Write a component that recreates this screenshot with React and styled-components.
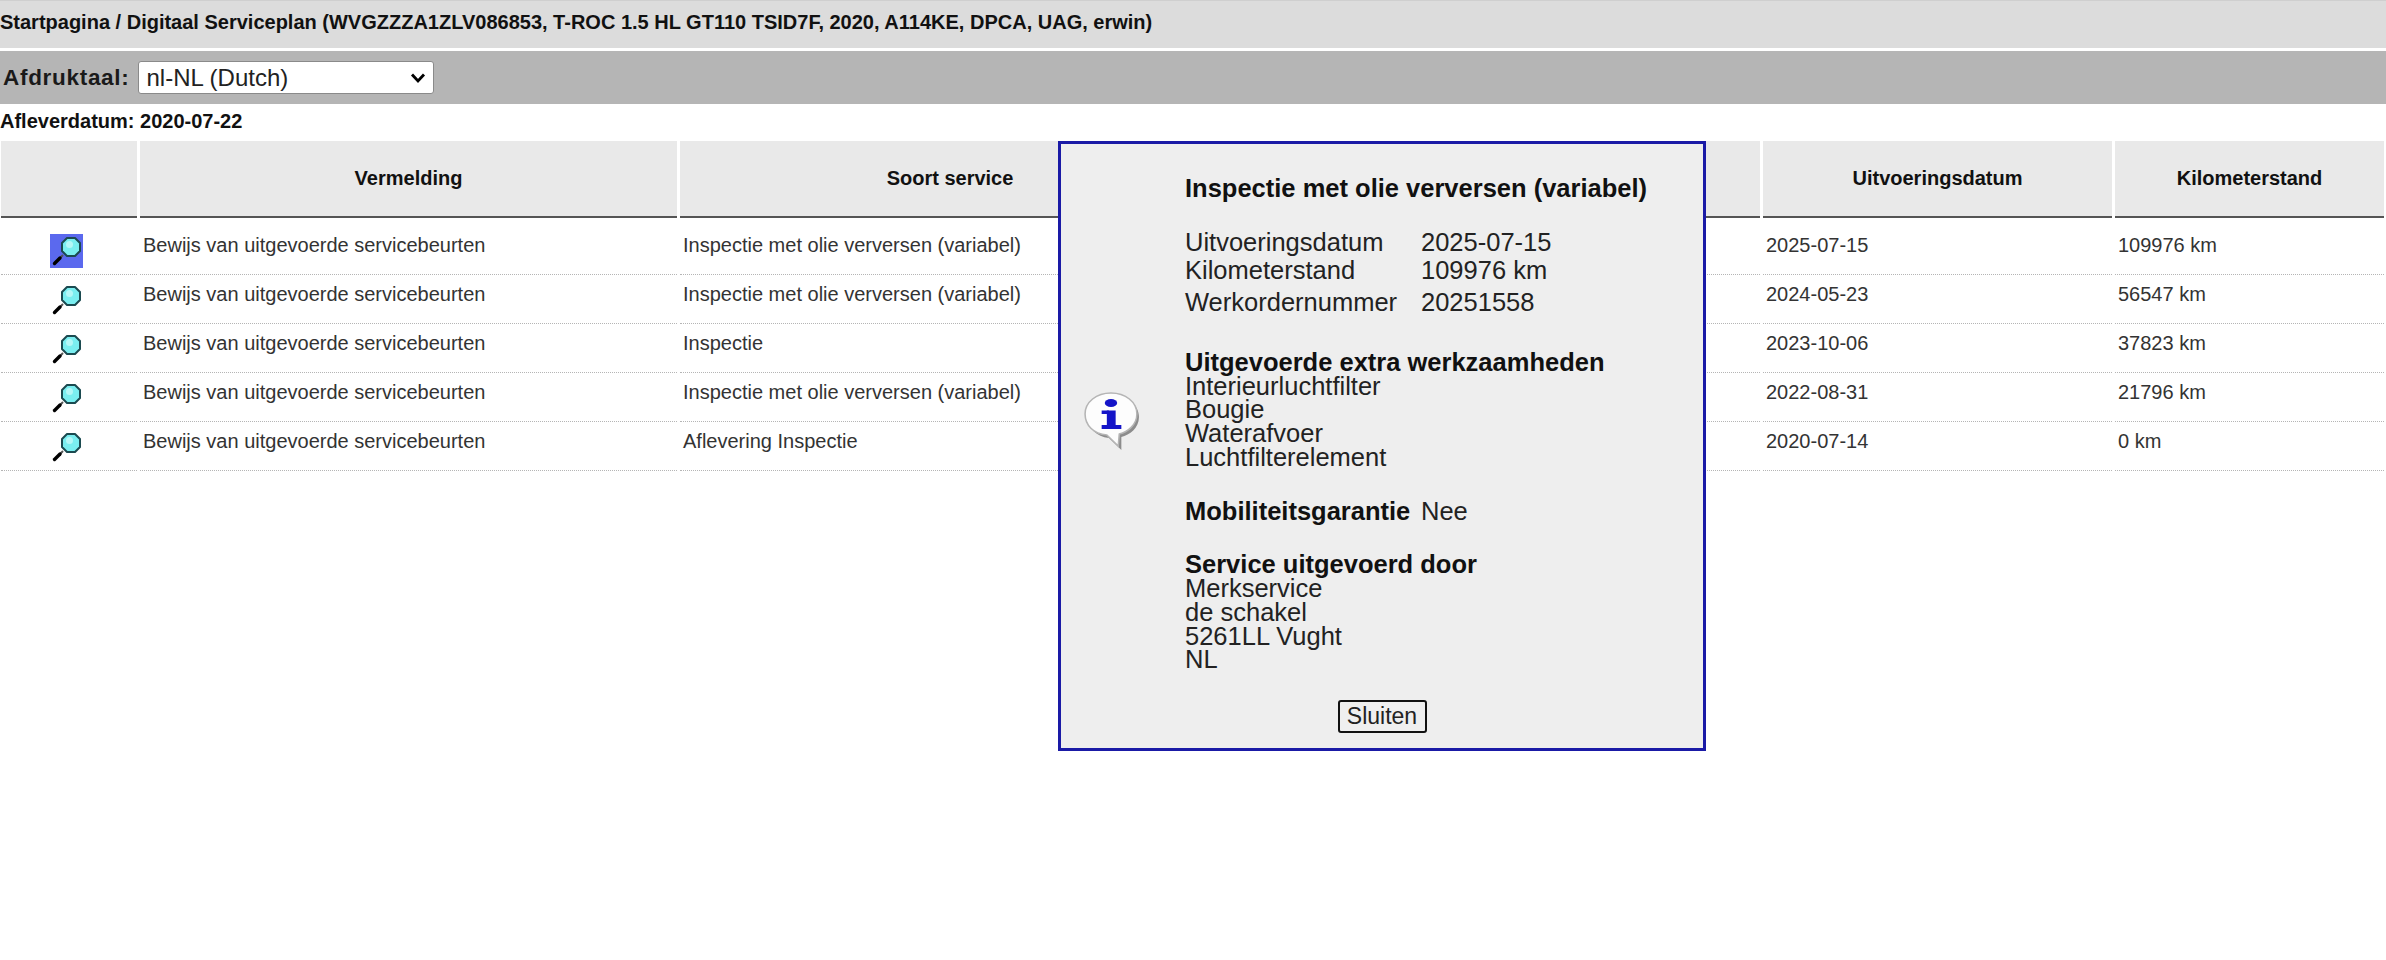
import React from "react";
import styled, { createGlobalStyle } from "styled-components";

const Global = createGlobalStyle`
  html, body { margin: 0; padding: 0; background: #fff; }
  body { font-family: "Liberation Sans", Arial, sans-serif; color: #111; }
`;

const Page = styled.div`
  position: relative;
  width: 2386px;
  height: 960px;
  overflow: hidden;
`;
const TopBar = styled.div`
  height: 48px;
  background: #dcdcdc;
  border-top: 1px solid #cfcfcf;
  box-sizing: border-box;
  padding-bottom: 5px;
  display: flex;
  align-items: center;
  font-size: 20px;
  font-weight: 700;
  color: #111;
`;
const LangBar = styled.div`
  margin-top: 3px;
  height: 53px;
  background: #b5b5b5;
  display: flex;
  align-items: center;
  padding-left: 3px;
  gap: 9px;
`;
const LangLabel = styled.label`
  font-size: 22.5px;
  font-weight: 700;
  letter-spacing: 0.7px;
  color: #1a1a1a;
`;
const LangSelect = styled.select`
  appearance: none;
  width: 296px;
  height: 33px;
  font-family: "Liberation Sans", Arial, sans-serif;
  font-size: 24px;
  color: #222;
  background: #fff url("data:image/svg+xml;utf8,<svg xmlns='http://www.w3.org/2000/svg' width='16' height='12' viewBox='0 0 16 12'><path d='M2 2.5 L8 9 L14 2.5' fill='none' stroke='black' stroke-width='2.8'/></svg>") no-repeat right 7px center;
  border: 1px solid #8a8a8a;
  border-radius: 3px;
  padding: 0 7px;
`;
const DeliveryDate = styled.div`
  height: 37px;
  box-sizing: border-box;
  padding-bottom: 2px;
  display: flex;
  align-items: center;
  font-size: 20px;
  font-weight: 700;
  color: #111;
`;
const Row = styled.div`
  display: grid;
  grid-template-columns: 136px 537px 540px 537px 349px 269px;
  column-gap: 3px;
  padding-left: 1px;
`;
const HeadCell = styled.div`
  height: 77px;
  box-sizing: border-box;
  background: #e9e9e9;
  border-bottom: 2px solid #555;
  display: flex;
  align-items: center;
  justify-content: center;
  font-size: 20px;
  font-weight: 700;
  color: #111;
`;
const Cell = styled.div`
  box-sizing: border-box;
  padding: ${(p) => (p.$first ? "16px" : "8px")} 3px 6px;
  border-bottom: 1px dotted #b5b5b5;
  font-size: 20px;
  line-height: 23px;
  color: #333;
`;
const IconCell = styled(Cell)`
  padding-left: 49px;
`;
const LensButton = styled.div`
  width: 33px;
  height: 34px;
  background: ${(p) => (p.$active ? "#5b69ee" : "transparent")};
`;
const Lens = styled.svg`
  display: block;
`;
const Modal = styled.div`
  position: absolute;
  left: 1058px;
  top: 141px;
  width: 648px;
  height: 610px;
  box-sizing: border-box;
  background: #eeeeee;
  border: 3px solid #1a1aa6;
  padding: 33px 0 15px;
  color: #222;
  font-size: 25.5px;
  line-height: 23.75px;
`;
const ModalMain = styled.div`
  display: flex;
  align-items: center;
  padding-left: 22px;
  gap: 45px;
`;
const InfoIcon = styled.svg`
  flex: none;
  margin-bottom: 8px;
`;
const ModalBody = styled.div`
  flex: 1;
`;
const ModalTitle = styled.div`
  font-weight: 700;
  color: #111;
  margin-bottom: 28px;
`;
const DataGrid = styled.div`
  display: grid;
  grid-template-columns: 236px auto;
  grid-template-rows: 28px 28px 36px;
  align-items: center;
`;
const Section = styled.div`
  margin-top: 30px;
`;
const SectionHead = styled.div`
  font-weight: 700;
  color: #111;
`;
const InlineSection = styled(Section)`
  display: grid;
  grid-template-columns: 236px auto;
`;
const ModalFooter = styled.div`
  margin-top: 28px;
  display: flex;
  justify-content: center;
`;
const CloseButton = styled.button`
  width: 89px;
  height: 33px;
  padding: 0;
  box-sizing: border-box;
  background: #efefef;
  border: 2px solid #111;
  border-radius: 3px;
  font-family: "Liberation Sans", Arial, sans-serif;
  font-size: 23px;
  color: #222;
`;

const LensIcon = () => (
  <Lens width="33" height="34" viewBox="0 0 33 34">
    <line x1="13" y1="21" x2="9" y2="25" stroke="#555" strokeWidth="2" />
    <line x1="10" y1="24" x2="4.5" y2="29.5" stroke="#000" strokeWidth="3.4" strokeLinecap="round" />
    <polygon
      points="17,4 25,4 30,9 30,17 25,22 17,22 12,17 12,9"
      fill="#7aeef0"
      stroke="#1b4a50"
      strokeWidth="2"
      strokeLinejoin="round"
    />
    <circle cx="19.5" cy="10.5" r="3.5" fill="#b5f7f7" />
  </Lens>
);

const BubbleIcon = () => (
  <InfoIcon width="57" height="58" viewBox="0 0 55 58" preserveAspectRatio="none">
    <path d="M29 4C43 4 54 13 54 25C54 36 45 43 37 45L37 58L25 46C13 45 5 36 5 25C5 13 15 4 29 4Z" fill="#8c8c8c" />
    <path
      d="M27 1C41 1 52 10 52 22C52 33 43 40 35 42L34 54L23 43C10 42 2 33 2 22C2 10 13 1 27 1Z"
      fill="#fdfdfd"
      stroke="#b5b5b5"
      strokeWidth="1.5"
    />
    <ellipse cx="27" cy="11" rx="6" ry="4" fill="#1414c8" />
    <rect x="23" y="18.5" width="8.5" height="17" fill="#1414c8" />
    <rect x="18" y="18.5" width="7" height="3.5" fill="#1414c8" />
    <rect x="18" y="33" width="19" height="4" fill="#1414c8" />
  </InfoIcon>
);

const heads = ["", "Vermelding", "Soort service", "", "Uitvoeringsdatum", "Kilometerstand"];
const rows = [
  ["Inspectie met olie verversen (variabel)", "2025-07-15", "109976 km"],
  ["Inspectie met olie verversen (variabel)", "2024-05-23", "56547 km"],
  ["Inspectie", "2023-10-06", "37823 km"],
  ["Inspectie met olie verversen (variabel)", "2022-08-31", "21796 km"],
  ["Aflevering Inspectie", "2020-07-14", "0 km"],
];

export default function App() {
  return (
    <Page>
      <Global />
      <TopBar>Startpagina / Digitaal Serviceplan (WVGZZZA1ZLV086853, T-ROC 1.5 HL GT110 TSID7F, 2020, A114KE, DPCA, UAG, erwin)</TopBar>
      <LangBar>
        <LangLabel>Afdruktaal:</LangLabel>
        <LangSelect defaultValue="nl">
          <option value="nl">nl-NL (Dutch)</option>
        </LangSelect>
      </LangBar>
      <DeliveryDate>Afleverdatum: 2020-07-22</DeliveryDate>
      <Row>
        {heads.map((h, i) => (
          <HeadCell key={i}>{h}</HeadCell>
        ))}
      </Row>
      {rows.map((r, i) => (
        <Row key={i}>
          <IconCell $first={i === 0}>
            <LensButton $active={i === 0}>
              <LensIcon />
            </LensButton>
          </IconCell>
          <Cell $first={i === 0}>Bewijs van uitgevoerde servicebeurten</Cell>
          <Cell $first={i === 0}>{r[0]}</Cell>
          <Cell $first={i === 0} />
          <Cell $first={i === 0}>{r[1]}</Cell>
          <Cell $first={i === 0}>{r[2]}</Cell>
        </Row>
      ))}
      <Modal>
        <ModalMain>
          <BubbleIcon />
          <ModalBody>
            <ModalTitle>Inspectie met olie verversen (variabel)</ModalTitle>
            <DataGrid>
              <div>Uitvoeringsdatum</div>
              <div>2025-07-15</div>
              <div>Kilometerstand</div>
              <div>109976 km</div>
              <div>Werkordernummer</div>
              <div>20251558</div>
            </DataGrid>
            <Section>
              <SectionHead>Uitgevoerde extra werkzaamheden</SectionHead>
              <div>Interieurluchtfilter</div>
              <div>Bougie</div>
              <div>Waterafvoer</div>
              <div>Luchtfilterelement</div>
            </Section>
            <InlineSection>
              <SectionHead>Mobiliteitsgarantie</SectionHead>
              <div>Nee</div>
            </InlineSection>
            <Section>
              <SectionHead>Service uitgevoerd door</SectionHead>
              <div>Merkservice</div>
              <div>de schakel</div>
              <div>5261LL Vught</div>
              <div>NL</div>
            </Section>
          </ModalBody>
        </ModalMain>
        <ModalFooter>
          <CloseButton>Sluiten</CloseButton>
        </ModalFooter>
      </Modal>
    </Page>
  );
}
